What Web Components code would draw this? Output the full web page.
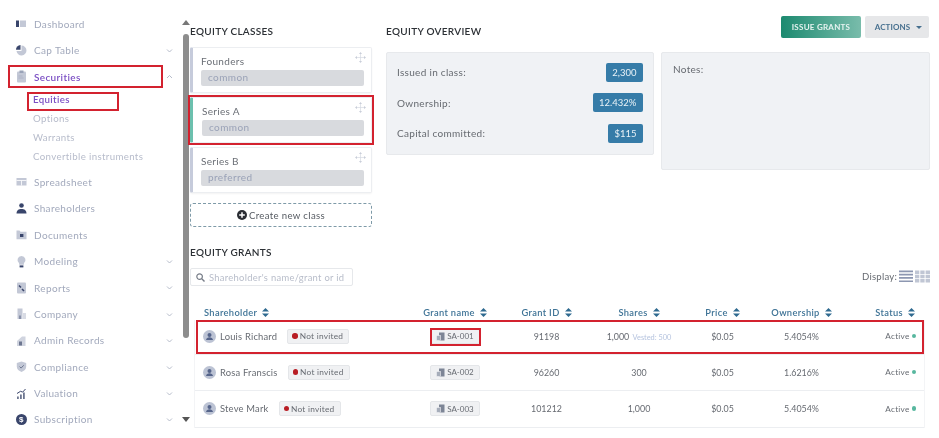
<!DOCTYPE html>
<html>
<head>
<meta charset="utf-8">
<style>
  html, body { margin: 0; padding: 0; background: #fff; }
  body { font-family: "Lato", "Liberation Sans", sans-serif; width: 939px; height: 438px; overflow: hidden; position: relative; filter: blur(.35px); }
  .app { display: flex; height: 438px; }
</style>
</head>
<body>
<div class="app">
  <side-nav></side-nav>
  <scroll-rail></scroll-rail>
  <equity-page></equity-page>
</div>
<mark-box x="8" y="65" w="155" h="23"></mark-box>
<mark-box x="27" y="92" w="92" h="19"></mark-box>
<mark-box x="188" y="95" w="186" h="50"></mark-box>
<mark-box x="196" y="320" w="728" h="34"></mark-box>
<mark-box x="430" y="328" w="51" h="18"></mark-box>

<script>
const ICONS = {
  dashboard: '<rect x="1" y="3.500" width="3" height="6.500" fill="#39456b"/><rect x="5" y="3.500" width="6" height="6.500" fill="#c3c8d6"/>',
  pie: '<path d="M6.500 1.500a5 5 0 1 1-5 5.500h5z" fill="#c3c8d6"/><path d="M5.500 1a4.600 4.600 0 0 0-4.500 4.800h4.500z" fill="#39456b"/>',
  clip: '<rect x="2" y="1.500" width="9" height="11" rx="1" fill="#c3c8d6"/><rect x="4.500" y=".5" width="4" height="2.500" fill="#9aa3b8"/><path d="M3.500 6h4M3.500 8h5" stroke="#a3abbf" stroke-width=".7"/>',
  sheet: '<rect x="1.500" y="3" width="10" height="7.500" fill="#c3c8d6"/><path d="M1.500 5.500h10M6.500 5.500v5" stroke="#fff" stroke-width=".8"/>',
  people: '<circle cx="6.500" cy="3.500" r="2.300" fill="#39456b"/><path d="M1.500 11.500c0-3.200 2.200-4.600 5-4.600s5 1.400 5 4.600z" fill="#39456b"/>',
  folder: '<path d="M1.500 2.500h3l1 1.200h6v7.500h-10z" fill="#c3c8d6"/><rect x="5" y="6" width="3.400" height="3" fill="#39456b"/>',
  bulb: '<path d="M6.500 1a4 4 0 0 1 2.400 7.200v1.600H4.100V8.200A4 4 0 0 1 6.500 1z" fill="#c3c8d6"/><rect x="4.600" y="10.400" width="3.800" height="2" fill="#39456b"/>',
  report: '<rect x="2" y="1.500" width="9" height="11" rx="1" fill="#c3c8d6"/><path d="M4 4.500l2 2M7 8l2 2" stroke="#39456b" stroke-width="1.600"/>',
  company: '<rect x="2.500" y="1.500" width="5" height="10.500" fill="#c3c8d6"/><rect x="8" y="6" width="3" height="6" fill="#d8dbe4"/><rect x="4" y="8.500" width="2" height="3.500" fill="#8790a8"/>',
  admin: '<path d="M2 7l5-4.500h3.500V12H2z" fill="#d0d4df"/><rect x="4" y="7.500" width="3" height="4" fill="#6d7690"/>',
  shield: '<path d="M6.500 1.500l4.700 1.500v3.600c0 2.800-2.200 4.600-4.700 5.400-2.500-.8-4.700-2.600-4.700-5.400V3z" fill="#c3c8d6"/><path d="M4.600 6.600l1.500 1.500 2.600-2.800" stroke="#6d7690" stroke-width="1" fill="none"/>',
  chart: '<path d="M2 12V9.500h1.800V12zM5 12V7.500h1.800V12zM8 12V5.500h1.800V12z" fill="#6d7690"/><path d="M2 6.500l3.500-2.200 2.200.8L10.500 2" stroke="#39456b" stroke-width="1" fill="none"/>',
  dollar: '<circle cx="6.500" cy="6.500" r="5.500" fill="#39456b"/><text x="6.500" y="9.400" font-size="8" font-weight="700" text-anchor="middle" fill="#fff" font-family="Liberation Sans">$</text>'
};

class SideNav extends HTMLElement {
  constructor() {
    super();
    const items = [
      ['Dashboard', 'dashboard', ''],
      ['Cap Table', 'pie', 'down'],
      ['Securities', 'clip', 'up', ['Equities', 'Options', 'Warrants', 'Convertible instruments']],
      ['Spreadsheet', 'sheet', ''],
      ['Shareholders', 'people', ''],
      ['Documents', 'folder', ''],
      ['Modeling', 'bulb', 'down'],
      ['Reports', 'report', 'down'],
      ['Company', 'company', 'down'],
      ['Admin Records', 'admin', 'down'],
      ['Compliance', 'shield', 'down'],
      ['Valuation', 'chart', 'down'],
      ['Subscription', 'dollar', 'down']
    ];
    const chevron = dir => dir ? `<svg class="chev" width="7" height="5" viewBox="0 0 7 5"><path d="${dir === 'up' ? 'M1 4l2.500-2.500L6 4' : 'M1 1.500L3.500 4 6 1.500'}" fill="none" stroke="#aeb4c4" stroke-width=".9"/></svg>` : '';
    const html = items.map(([label, icon, dir, sub]) => `
      <div class="item ${sub ? 'open' : ''}">
        <svg class="icon" width="13" height="13" viewBox="0 0 13 13">${ICONS[icon]}</svg>
        <span>${label}</span>${chevron(dir)}
      </div>
      ${sub ? `<div class="sub">${sub.map((s, i) => `<div class="${i === 0 ? 'on' : ''}">${s}</div>`).join('')}</div>` : ''}
    `).join('');
    this.attachShadow({ mode: 'open' }).innerHTML = `
      <style>
        :host { display: block; width: 182px; flex: none; padding-top: 10.6px; box-sizing: border-box; font-size: 10px; letter-spacing: .35px; color: #a2a9bc; }
        .item { height: 26.4px; display: flex; align-items: center; padding-left: 15px; position: relative; }
        .icon { flex: none; margin-right: 6px; }
        .chev { position: absolute; left: 166px; top: 11px; }
        .open { color: #7b4fc4; font-weight: 600; }
        .sub { margin: 0 0 3px; padding-left: 33px; color: #b7bccb; font-size: 9.7px; }
        .sub div { height: 19px; line-height: 19px; }
        .sub .on { color: #7b4fc4; font-weight: 600; }
      </style>
      ${html}`;
  }
}
customElements.define('side-nav', SideNav);

class ScrollRail extends HTMLElement {
  constructor() {
    super();
    this.attachShadow({ mode: 'open' }).innerHTML = `
      <style>
        :host { display: flex; flex-direction: column; align-items: center; width: 8px; flex: none; padding-top: 20px; box-sizing: border-box; height: 422px; }
        .up, .down { width: 0; height: 0; border-left: 4px solid transparent; border-right: 4px solid transparent; }
        .up { border-bottom: 5px solid #777; }
        .down { border-top: 5px solid #555; margin-top: auto; }
        .thumb { width: 6px; height: 304px; margin-top: 9px; border-radius: 3px; background: #8d8d8d; }
      </style>
      <div class="up"></div><div class="thumb"></div><div class="down"></div>`;
  }
}
customElements.define('scroll-rail', ScrollRail);

class SectionTitle extends HTMLElement {
  constructor() {
    super();
    this.attachShadow({ mode: 'open' }).innerHTML = `
      <style>:host { display: block; font-size: 10px; line-height: 14px; letter-spacing: .3px; font-weight: 600; color: #2c3035; text-transform: uppercase; }</style>
      <slot></slot>`;
  }
}
customElements.define('section-title', SectionTitle);

class ClassCard extends HTMLElement {
  constructor() {
    super();
    const active = this.hasAttribute('active');
    this.attachShadow({ mode: 'open' }).innerHTML = `
      <style>
        :host { display: block; height: 46px; box-sizing: border-box; background: #fff; border: 1px solid #eceef1; border-left: 3px solid ${active ? '#6cc0ae' : '#c6cbdb'}; border-radius: 2px; padding: 7px 7px 0 ${active ? 9 : 8}px; position: relative; box-shadow: 0 1px 2px rgba(0,0,0,.05); }
        .name { font-size: 10px; line-height: 13px; letter-spacing: .3px; color: #6b6f76; }
        .type { margin-top: 2px; height: 16px; line-height: 15px; background: #d8dade; border-radius: 2px; padding-left: 7px; font-size: 10px; letter-spacing: .4px; color: #9aa2b7; }
        svg { position: absolute; right: 5px; top: 4px; }
      </style>
      <div class="name"><slot></slot></div>
      <div class="type">${this.getAttribute('type')}</div>
      <svg width="11" height="11" viewBox="0 0 11 11" fill="#c9ced9"><path d="M5.500 0l1.500 2H4zM5.500 11L4 9h3zM0 5.500L2 4v3zM11 5.500L9 7V4z"/><path d="M5.500 2v7M2 5.500h7" stroke="#d6dae2" stroke-width=".7"/></svg>`;
  }
}
customElements.define('class-card', ClassCard);

class EquityClasses extends HTMLElement {
  constructor() {
    super();
    this.attachShadow({ mode: 'open' }).innerHTML = `
      <style>
        :host { display: flex; flex-direction: column; gap: 4px; width: 182px; flex: none; padding-top: 8px; box-sizing: border-box; }
        section-title { margin-bottom: 5px; }
        .create { margin-top: 6px; height: 24px; box-sizing: border-box; border: 1px dashed #7e9aa8; border-radius: 3px; display: flex; align-items: center; justify-content: center; gap: 2px; font-size: 9.6px; letter-spacing: .35px; color: #565b62; }
      </style>
      <section-title>Equity classes</section-title>
      <class-card type="common">Founders</class-card>
      <class-card type="common" active>Series A</class-card>
      <class-card type="preferred">Series B</class-card>
      <div class="create">
        <svg width="10" height="10" viewBox="0 0 10 10"><circle cx="5" cy="5" r="5" fill="#2a2d33"/><path d="M5 2.200v5.600M2.200 5h5.600" stroke="#fff" stroke-width="1.500"/></svg>
        Create new class
      </div>`;
  }
}
customElements.define('equity-classes', EquityClasses);

class StatRow extends HTMLElement {
  constructor() {
    super();
    this.attachShadow({ mode: 'open' }).innerHTML = `
      <style>
        :host { display: flex; justify-content: space-between; align-items: center; height: 20px; font-size: 10px; letter-spacing: .3px; color: #666a70; }
        b { font-weight: 400; background: #367ca8; color: #e9f2f7; border-radius: 2px; height: 19px; line-height: 19px; padding: 0 6.500px; font-size: 9.5px; letter-spacing: 0; }
      </style>
      <span><slot></slot></span><b>${this.getAttribute('value')}</b>`;
  }
}
customElements.define('stat-row', StatRow);

class EquityOverview extends HTMLElement {
  constructor() {
    super();
    this.attachShadow({ mode: 'open' }).innerHTML = `
      <style>
        :host { display: grid; grid-template-columns: 268px 269px; column-gap: 7px; grid-template-rows: 36px auto; flex: none; }
        section-title { align-self: end; padding-bottom: 14px; }
        .actions { display: flex; justify-content: flex-end; gap: 4px; height: 22px; margin-right: 1px; }
        button { font: inherit; border: 0; border-radius: 2px; height: 22px; padding: 0; font-size: 8px; font-weight: 700; letter-spacing: .25px; }
        .issue { width: 80px; color: #e6f3f0; background: linear-gradient(90deg, #1c8a70, #79bcab); }
        .more { width: 64px; padding-left: 3px; color: #47708f; background: #e6e7e9; letter-spacing: .1px; }
        .more i { display: inline-block; margin-left: 6px; vertical-align: 1px; border-left: 3px solid transparent; border-right: 3px solid transparent; border-top: 3px solid #47708f; }
        .panel { background: #f0f2f5; border: 1px solid #e7e9ec; border-radius: 2px; box-sizing: border-box; font-size: 10px; letter-spacing: .3px; color: #666a70; }
        .stats { height: 103px; padding: 9px 10px; display: flex; flex-direction: column; gap: 10.600px; }
        .notes { height: 118px; padding: 10px 11px; }
      </style>
      <section-title>Equity overview</section-title>
      <div class="actions">
        <button class="issue">ISSUE GRANTS</button>
        <button class="more">ACTIONS<i></i></button>
      </div>
      <div class="panel stats">
        <stat-row value="2,300">Issued in class:</stat-row>
        <stat-row value="12.432%">Ownership:</stat-row>
        <stat-row value="$115">Capital committed:</stat-row>
      </div>
      <div class="panel notes">Notes:</div>`;
  }
}
customElements.define('equity-overview', EquityOverview);

const COLS = '209px 102px 81px 104px 63px 95px 74px';

class SortHead extends HTMLElement {
  constructor() {
    super();
    this.attachShadow({ mode: 'open' }).innerHTML = `
      <style>
        :host { display: flex; align-items: center; gap: 5px; font-size: 9.3px; font-weight: 600; letter-spacing: .35px; color: #3e7396; }
      </style>
      <slot></slot>
      <svg width="7" height="9" viewBox="0 0 7 9" fill="#2f6a90"><path d="M3.500 0L7 3.600H0zM3.500 9L0 5.400h7z"/></svg>`;
  }
}
customElements.define('sort-head', SortHead);

class GrantRow extends HTMLElement {
  constructor() {
    super();
    const a = n => this.getAttribute(n);
    const vested = a('vested') ? `<span class="vest">Vested: ${a('vested')}</span>` : '';
    this.attachShadow({ mode: 'open' }).innerHTML = `
      <style>
        :host { display: grid; grid-template-columns: ${COLS}; height: 36px; padding-bottom: 1px; align-items: center; border-bottom: 1px solid #eceef1; box-sizing: border-box; font-size: 8.9px; letter-spacing: 0; color: #676b72; text-align: center; }
        .who { display: flex; align-items: center; padding-left: 8px; font-size: 9.4px; letter-spacing: .2px; text-align: left; }
        .who svg { flex: none; margin-right: 4px; }
        .pill { display: inline-flex; align-items: center; height: 15px; box-sizing: border-box; background: #f0f1f3; border: 1px solid #e4e6e9; border-radius: 2px; font-size: 8.3px; letter-spacing: .25px; }
        .invite { margin-left: 10px; padding: 0 5px 0 4px; gap: 2px; }
        .invite i { width: 5.500px; height: 5.500px; border-radius: 50%; background: #b81d24; }
        .grant { padding: 0 5px 0 5px; gap: 2px; font-size: 8px; letter-spacing: 0; }
        .vest { color: #b6c4df; font-size: 7.4px; margin-left: 1px; }
        .status { text-align: right; padding-right: 7px; font-size: 8.200px; letter-spacing: .25px; white-space: nowrap; }
        .status i { display: inline-block; width: 4.500px; height: 4.500px; margin-left: 2px; border-radius: 50%; background: #58b79f; vertical-align: 1px; }
      </style>
      <div class="who">
        <svg width="13" height="13" viewBox="0 0 13 13"><circle cx="6.500" cy="6.500" r="6.500" fill="#bcc3d4"/><circle cx="6.500" cy="5" r="2" fill="#55648a"/><path d="M3 10c.4-2 1.700-2.800 3.500-2.800S9.600 8 10 10z" fill="#55648a"/></svg>
        <span>${a('name')}</span>
        <span class="pill invite"><i></i>Not invited</span>
      </div>
      <div><span class="pill grant"><svg width="9" height="9" viewBox="0 0 9 9"><rect x="3" y=".5" width="5.500" height="8" fill="#7d8596"/><rect x=".5" y="3.500" width="4" height="5" fill="#a6adba" stroke="#f0f1f3" stroke-width=".6"/></svg>${a('grant')}</span></div>
      <div>${a('gid')}</div>
      <div>${a('shares')} ${vested}</div>
      <div>${a('price')}</div>
      <div>${a('own')}</div>
      <div class="status">Active<i></i></div>`;
  }
}
customElements.define('grant-row', GrantRow);

class GrantsTable extends HTMLElement {
  constructor() {
    super();
    this.attachShadow({ mode: 'open' }).innerHTML = `
      <style>
        :host { display: block; width: 729px; margin-left: 5px; }
        .head { display: grid; grid-template-columns: ${COLS}; height: 16px; align-items: center; }
        .head sort-head { justify-content: center; }
        .head sort-head:first-child { justify-content: flex-start; padding-left: 9px; }
        .head sort-head:last-child { justify-content: flex-end; padding-right: 8px; }
        .rows { border-left: 1px solid #f3f4f6; border-right: 1px solid #f3f4f6; margin-right: -1px; margin-left: -1px; }
        grant-row:first-of-type { height: 35px; padding-bottom: 2px; }
        grant-row:last-of-type { height: 37px; }
      </style>
      <div class="head">
        <sort-head>Shareholder</sort-head>
        <sort-head>Grant name</sort-head>
        <sort-head>Grant ID</sort-head>
        <sort-head>Shares</sort-head>
        <sort-head>Price</sort-head>
        <sort-head>Ownership</sort-head>
        <sort-head>Status</sort-head>
      </div>
      <div class="rows">
        <grant-row name="Louis Richard" grant="SA-001" gid="91198" shares="1,000" vested="500" price="$0.05" own="5.4054%"></grant-row>
        <grant-row name="Rosa Franscis" grant="SA-002" gid="96260" shares="300" price="$0.05" own="1.6216%"></grant-row>
        <grant-row name="Steve Mark" grant="SA-003" gid="101212" shares="1,000" price="$0.05" own="5.4054%"></grant-row>
      </div>`;
  }
}
customElements.define('grants-table', GrantsTable);

class EquityPage extends HTMLElement {
  constructor() {
    super();
    this.attachShadow({ mode: 'open' }).innerHTML = `
      <style>
        :host { display: block; flex: 1; padding: 16px 0 0 0; min-width: 0; }
        .top { display: flex; gap: 14px; height: 211px; }
        section-title { margin-top: 18px; }
        .tools { display: flex; justify-content: space-between; align-items: flex-end; margin: 9px 9px 16px 0; height: 20px; }
        .search { width: 163px; height: 18px; box-sizing: border-box; border: 1px solid #e6e8eb; border-radius: 2px; display: flex; align-items: center; gap: 4px; padding-left: 5px; font-size: 9.400px; letter-spacing: .3px; color: #b8bdca; margin-bottom: 2px; }
        .display { display: flex; align-items: center; gap: 2px; font-size: 9.600px; letter-spacing: .2px; color: #676b72; margin-bottom: 5px; }
      </style>
      <div class="top">
        <equity-classes></equity-classes>
        <equity-overview></equity-overview>
      </div>
      <section-title>Equity grants</section-title>
      <div class="tools">
        <div class="search">
          <svg width="9" height="9" viewBox="0 0 9 9"><circle cx="3.600" cy="3.600" r="2.800" fill="none" stroke="#777d88" stroke-width="1.200"/><path d="M5.800 5.800L8.500 8.500" stroke="#777d88" stroke-width="1.400"/></svg>
          Shareholder's name/grant or id
        </div>
        <div class="display">Display:
          <svg width="14" height="13" viewBox="0 0 14 13" fill="#8d97b1"><path d="M0 .5h14v1.700H0zM0 3.800h14v1.700H0zM0 7.100h14v1.700H0zM0 10.400h14v1.700H0z"/></svg>
          <svg width="15" height="13" viewBox="0 0 15 13" fill="#c0c6d4"><path d="M0 .5h4.300v3.500H0zM5.300 .5h4.300v3.500H5.300zM10.600 .5H15v3.500h-4.400zM0 4.800h4.300v3.500H0zM5.300 4.800h4.300v3.500H5.300zM10.600 4.800H15v3.500h-4.400zM0 9.100h4.300v3.500H0zM5.300 9.100h4.300v3.500H5.300zM10.600 9.100H15v3.500h-4.400z"/></svg>
        </div>
      </div>
      <grants-table></grants-table>`;
  }
}
customElements.define('equity-page', EquityPage);

class MarkBox extends HTMLElement {
  constructor() {
    super();
    const a = n => this.getAttribute(n) + 'px';
    this.attachShadow({ mode: 'open' }).innerHTML = `
      <style>
        :host { display: block; position: absolute; left: ${a('x')}; top: ${a('y')}; width: ${a('w')}; height: ${a('h')}; box-sizing: border-box; border: 2px solid #d3222f; pointer-events: none; }
      </style>`;
  }
}
customElements.define('mark-box', MarkBox);
</script>
</body>
</html>
